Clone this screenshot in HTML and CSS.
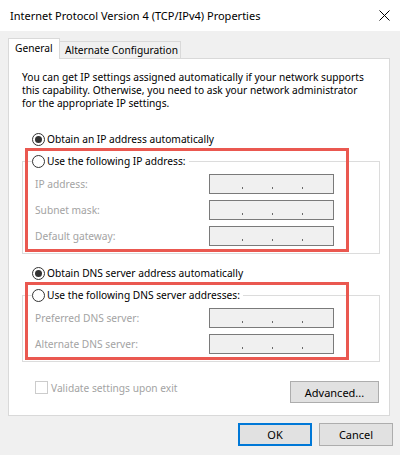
FILE: index.html
```html
<!DOCTYPE html>
<html lang="en">
<head>
<meta charset="utf-8">
<title>Internet Protocol Version 4 (TCP/IPv4) Properties</title>
<link rel="stylesheet" href="styles.css">
</head>
<body>
<div class="window">
  <header class="titlebar">
    <span class="title">Internet Protocol Version 4 (TCP/IPv4) Properties</span>
    <svg class="close" width="11" height="11" viewBox="0 0 11 11" aria-label="Close"><path d="M0.5 0.5 L10.5 10.5 M10.5 0.5 L0.5 10.5" stroke="#000" stroke-width="1" fill="none"/></svg>
  </header>
  <main class="body">
    <div class="tabs">
      <div class="tab active">General</div>
      <div class="tab">Alternate Configuration</div>
    </div>
    <section class="panel">
      <p class="intro">You can get IP settings assigned automatically if your network supports<br>this capability. Otherwise, you need to ask your network administrator<br>for the appropriate IP settings.</p>

      <div class="option"><span class="radio checked"></span><span>Obtain an IP address automatically</span></div>
      <div class="group">
        <div class="legend"><span class="radio"></span><span>Use the following IP address:</span></div>
        <div class="field"><span class="label">IP address:</span><span class="ipbox"><i></i><i></i><i></i></span></div>
        <div class="field"><span class="label">Subnet mask:</span><span class="ipbox"><i></i><i></i><i></i></span></div>
        <div class="field"><span class="label">Default gateway:</span><span class="ipbox"><i></i><i></i><i></i></span></div>
        <div class="highlight"></div>
      </div>

      <div class="option option-dns"><span class="radio checked"></span><span>Obtain DNS server address automatically</span></div>
      <div class="group">
        <div class="legend"><span class="radio"></span><span>Use the following DNS server addresses:</span></div>
        <div class="field"><span class="label">Preferred DNS server:</span><span class="ipbox"><i></i><i></i><i></i></span></div>
        <div class="field"><span class="label">Alternate DNS server:</span><span class="ipbox"><i></i><i></i><i></i></span></div>
        <div class="highlight"></div>
      </div>

      <div class="footer-row">
        <div class="check"><span class="box"></span><span>Validate settings upon exit</span></div>
        <button class="btn advanced" type="button">Advanced...</button>
      </div>
    </section>
    <div class="actions">
      <button class="btn default" type="button">OK</button>
      <button class="btn" type="button">Cancel</button>
    </div>
  </main>
</div>
</body>
</html>
```
FILE: styles.css
```css
* {
  box-sizing: border-box;
  margin: 0;
  padding: 0;
}

html, body {
  width: 400px;
  height: 455px;
  overflow: hidden;
}

body {
  font-family: "Noto Sans", "Open Sans", sans-serif;
  font-size: 10.2px;
  color: #000;
  background: #f0f0f0;
}

.window {
  width: 400px;
  height: 455px;
}

.titlebar {
  height: 31px;
  background: #fff;
  display: flex;
  align-items: center;
  justify-content: space-between;
  padding: 0 10px;
}

.title {
  font-size: 11px;
}

.close {
  display: block;
}

.body {
  padding: 7px 0 0 8px;
}

.tabs {
  display: flex;
  align-items: flex-end;
  height: 20px;
  position: relative;
  z-index: 1;
}

.tab {
  height: 17px;
  width: 122px;
  margin-left: -1px;
  border: 1px solid #d9d9d9;
  border-bottom: none;
  background: #f0f0f0;
  padding: 0 0 1px 5px;
  display: flex;
  align-items: center;
  white-space: nowrap;
}

.tab.active {
  width: 52px;
  height: 21px;
  margin: 0 0 -1px 0;
  padding: 0 0 2px 6px;
  background: #fff;
  position: relative;
  z-index: 2;
}

.panel {
  width: 382px;
  height: 358px;
  background: #fff;
  border: 1px solid #d9d9d9;
  padding: 12px 0 0 13px;
}

.intro {
  line-height: 13px;
  white-space: nowrap;
}

.option {
  display: flex;
  align-items: center;
  gap: 2px;
  height: 16px;
  margin: 21px 0 0 10px;
}

.option-dns {
  margin-top: 11px;
}

.radio {
  width: 13px;
  height: 13px;
  border: 1px solid #333;
  border-radius: 50%;
  background: #fff;
  display: flex;
  align-items: center;
  justify-content: center;
  flex: none;
}

.radio.checked::after {
  content: "";
  width: 7px;
  height: 7px;
  border-radius: 50%;
  background: #333;
}

.group {
  position: relative;
  width: 358px;
  margin-top: 14px;
  border: 1px solid #dcdcdc;
  padding: 0 0 7px 12px;
}

.legend {
  display: flex;
  align-items: center;
  gap: 2px;
  width: fit-content;
  height: 16px;
  margin: -9px 0 0 -3px;
  padding-right: 3px;
  background: #fff;
}

.field {
  display: grid;
  grid-template-columns: 174px 125px;
  align-items: center;
  height: 20px;
  margin-top: 6px;
}

.legend + .field {
  margin-top: 5px;
}

.label {
  color: #a3a3a3;
}

.ipbox {
  height: 20px;
  border: 1px solid #7a7a7a;
  background: #f0f0f0;
  display: flex;
  align-items: flex-end;
  padding: 0 0 4px 32px;
}

.ipbox i {
  width: 1px;
  height: 2px;
  background: #6a6a6a;
  margin-right: 29px;
}

.highlight {
  position: absolute;
  left: 2px;
  top: -14px;
  bottom: 1px;
  width: 324px;
  border: 3px solid #ea5850;
  pointer-events: none;
}

.footer-row {
  display: flex;
  justify-content: space-between;
  align-items: flex-start;
  width: 357px;
  margin-top: 19px;
}

.check {
  display: flex;
  align-items: center;
  gap: 3px;
  height: 13px;
  margin-left: 13px;
  color: #a3a3a3;
}

.check .box {
  width: 13px;
  height: 13px;
  border: 1px solid #cccccc;
  background: #fff;
}

.btn {
  font-family: inherit;
  font-size: 11px;
  color: #000;
  background: #e1e1e1;
  border: 1px solid #adadad;
  height: 23px;
  width: 74px;
}

.advanced {
  width: 89px;
  height: 22px;
}

.btn.default {
  border: 2px solid #0078d7;
}

.actions {
  display: flex;
  justify-content: flex-end;
  gap: 7px;
  margin-top: 7px;
  padding-right: 7px;
}
```
